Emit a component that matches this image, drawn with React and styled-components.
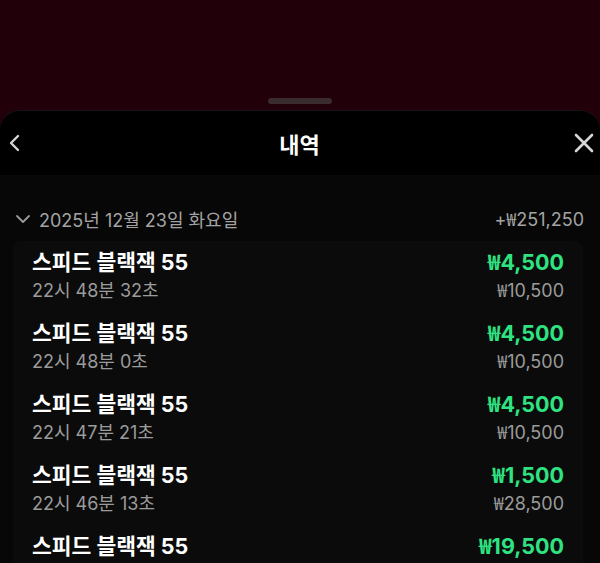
import React from 'react';
import styled, { createGlobalStyle } from 'styled-components';

const GlobalStyle = createGlobalStyle`
  html, body {
    margin: 0;
    padding: 0;
    background: #22000a;
    overflow: hidden;
  }
  body {
    font-family: Inter, 'Noto Sans CJK KR', sans-serif;
  }
`;

const Page = styled.div`
  height: 563px;
  overflow: hidden;
`;

const Backdrop = styled.div`
  height: 110px;
  display: flex;
  align-items: flex-end;
  justify-content: center;
  padding-bottom: 6px;
  box-sizing: border-box;
`;

const Handle = styled.div`
  width: 64px;
  height: 6px;
  border-radius: 3px;
  background: #3a2b2f;
`;

const Sheet = styled.div`
  background: #000;
  border-radius: 20px 20px 0 0;
  border-top: 1px solid #16121a;
  min-height: 460px;
  overflow: hidden;
`;

const Header = styled.div`
  height: 64px;
  display: flex;
  align-items: center;
  justify-content: space-between;
  padding: 0 4px 0 3px;
`;

const Title = styled.h1`
  margin: 0;
  font-size: 22px;
  font-weight: 700;
  color: #fff;
  font-family: 'Noto Sans CJK KR', sans-serif;
`;

const IconButton = styled.button`
  width: 24px;
  height: 24px;
  padding: 0;
  border: none;
  background: none;
  display: flex;
  align-items: center;
  justify-content: center;
`;

const Content = styled.div`
  background: #070707;
  padding: 29px 16px 0 13px;
  min-height: 400px;
`;

const GroupHeader = styled.div`
  display: flex;
  align-items: center;
  justify-content: space-between;
  height: 30px;
  padding-left: 2px;
  color: #a3a3a3;
  font-size: 18px;
`;

const GroupLabel = styled.div`
  display: flex;
  align-items: center;
  gap: 8px;
`;

const Card = styled.div`
  margin-top: 7px;
  margin-right: 1px;
  background: #0b0b0b;
  border-radius: 8px;
  padding: 0 19px;
`;

const Row = styled.div`
  display: flex;
  justify-content: space-between;
  padding: 8px 0;
`;

const Col = styled.div`
  display: flex;
  flex-direction: column;
  align-items: ${(p) => (p.$end ? 'flex-end' : 'flex-start')};
  gap: 3px;
`;

const Name = styled.div`
  height: 26px;
  font-size: 21.5px;
  line-height: 26px;
  font-weight: 700;
  color: #fff;
`;

const Sub = styled.div`
  height: 26px;
  font-size: 18px;
  line-height: 26px;
  color: #9b9b9b;
`;

const Win = styled.div`
  height: 26px;
  font-size: 21.5px;
  line-height: 26px;
  font-weight: 700;
  color: #2fe383;
`;

const Won = styled.span`
  font-family: 'Noto Sans CJK KR', sans-serif;
  line-height: 0;
`;

const Money = ({ value }) => (
  <>
    <Won>₩</Won>
    {value}
  </>
);

const rows = [
  { time: '22시 48분 32초', win: '4,500', bet: '10,500' },
  { time: '22시 48분 0초', win: '4,500', bet: '10,500' },
  { time: '22시 47분 21초', win: '4,500', bet: '10,500' },
  { time: '22시 46분 13초', win: '1,500', bet: '28,500' },
  { time: '22시 45분 50초', win: '19,500', bet: '10,500' },
];

export default function App() {
  return (
    <Page>
      <GlobalStyle />
      <Backdrop>
        <Handle />
      </Backdrop>
      <Sheet>
        <Header>
          <IconButton aria-label="back">
            <svg width="18" height="20" viewBox="0 0 18 20" fill="none">
              <path d="M12 3 L5 10 L12 17" stroke="#d6d6d6" strokeWidth="2.4" strokeLinecap="round" strokeLinejoin="round" />
            </svg>
          </IconButton>
          <Title>내역</Title>
          <IconButton aria-label="close">
            <svg width="20" height="20" viewBox="0 0 20 20" fill="none">
              <path d="M2 2 L18 18 M18 2 L2 18" stroke="#d6d6d6" strokeWidth="2.6" strokeLinecap="round" />
            </svg>
          </IconButton>
        </Header>
        <Content>
          <GroupHeader>
            <GroupLabel>
              <svg width="16" height="10" viewBox="0 0 16 10" fill="none">
                <path d="M2 2 L8 8 L14 2" stroke="#9a9a9a" strokeWidth="1.8" strokeLinecap="round" strokeLinejoin="round" />
              </svg>
              <span>2025년 12월 23일 화요일</span>
            </GroupLabel>
            <span>
              +<Money value="251,250" />
            </span>
          </GroupHeader>
          <Card>
            {rows.map((r, i) => (
              <Row key={i}>
                <Col>
                  <Name>스피드 블랙잭 55</Name>
                  <Sub>{r.time}</Sub>
                </Col>
                <Col $end>
                  <Win>
                    <Money value={r.win} />
                  </Win>
                  <Sub>
                    <Money value={r.bet} />
                  </Sub>
                </Col>
              </Row>
            ))}
          </Card>
        </Content>
      </Sheet>
    </Page>
  );
}
